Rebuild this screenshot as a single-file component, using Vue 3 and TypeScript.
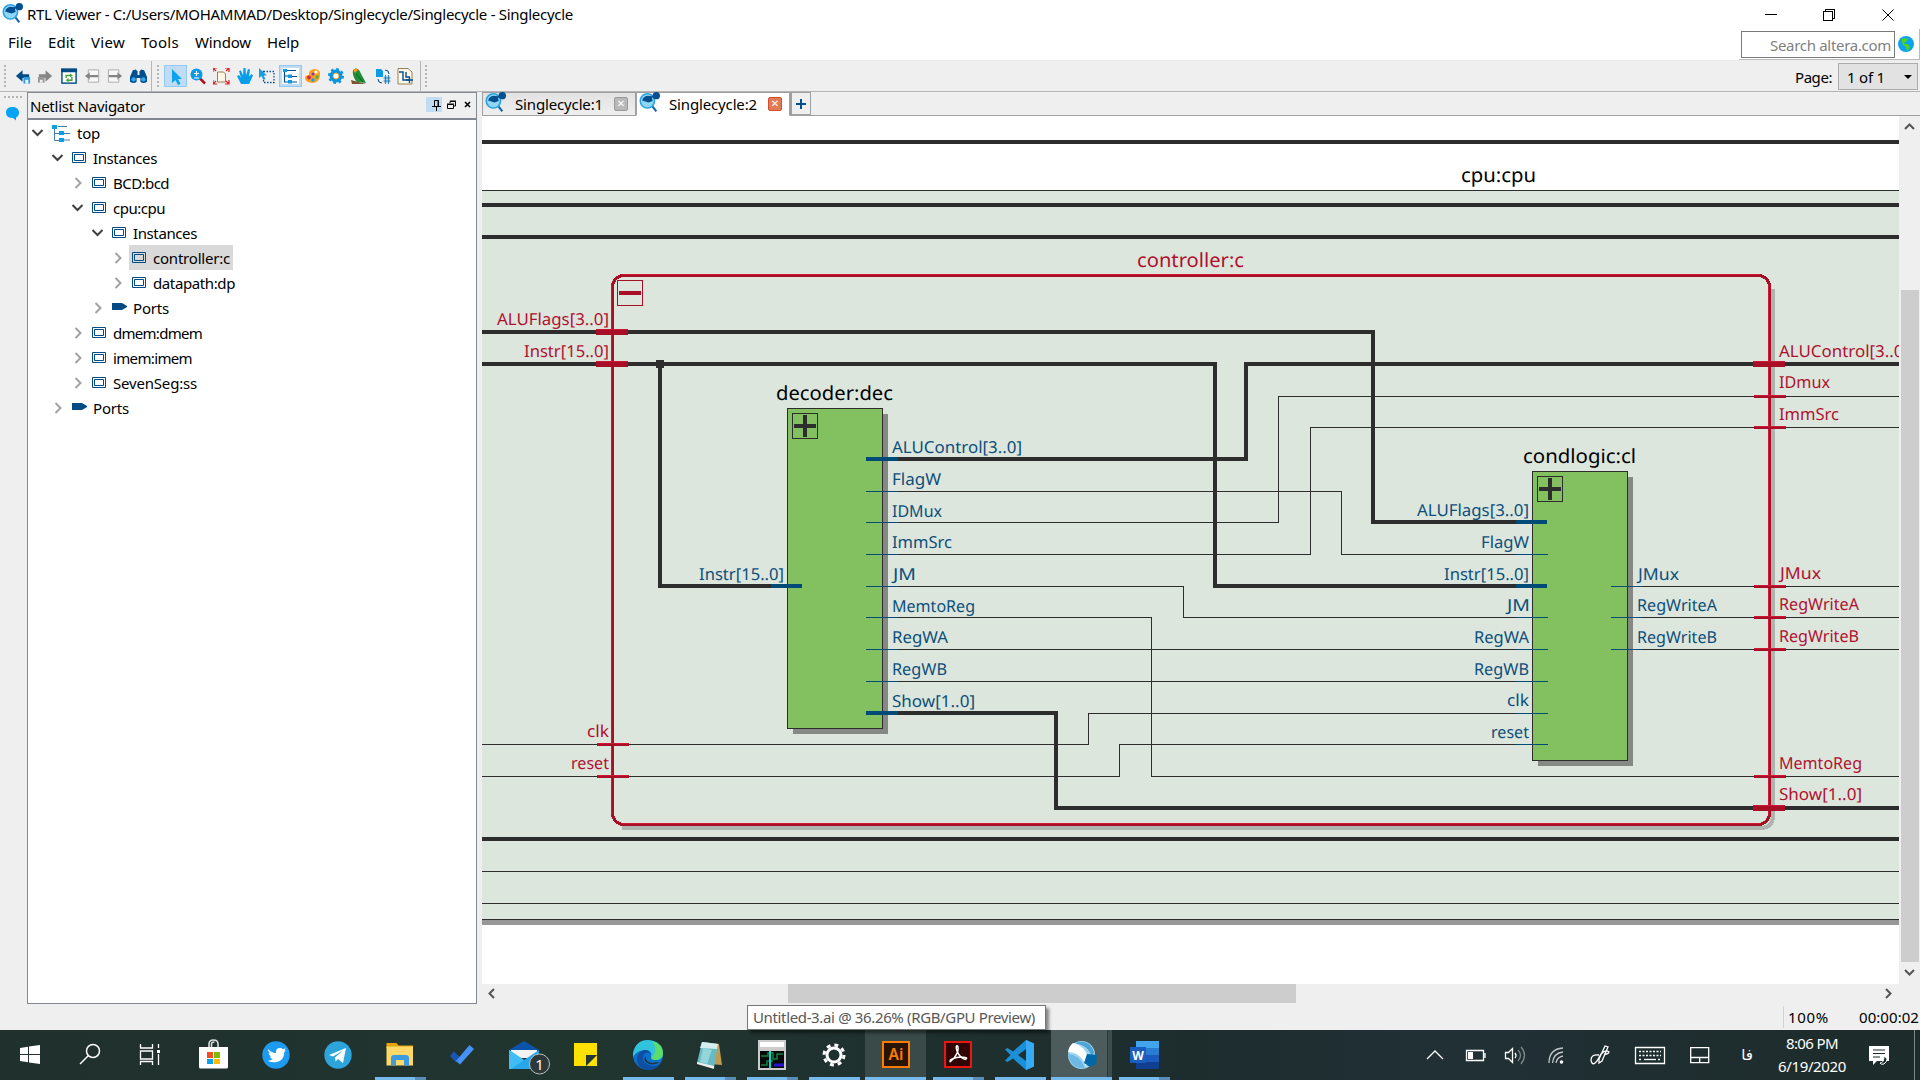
<script setup lang="ts">
interface Tool { id: string; x: number; w: number; on?: boolean; art: string }
interface TreeRow { label: string; depth: number; kind: 'root' | 'inst' | 'port'; open: boolean; width: number; selected?: boolean }
interface Label { t: string; x: number; y: number; w: number; end?: boolean }
interface Task { id: string; art: string; run?: boolean; multi?: boolean; active?: boolean; hot?: boolean }

/* Tightens or loosens tracking so that a label fills its column width. */
const vFit = {
  mounted(el: HTMLElement, binding: { value: number }) {
    const n = (el.textContent || '').trim().length
    const natural = el.getBoundingClientRect().width
    el.style.letterSpacing = (binding.value - natural) / n + 'px'
  },
}

const menus = [
  { t: 'File', w: 24 }, { t: 'Edit', w: 27 }, { t: 'View', w: 34 },
  { t: 'Tools', w: 38 }, { t: 'Window', w: 56 }, { t: 'Help', w: 32 },
]

const viewer = '<path d="M11.5 12l5 6.500" stroke="#1565a8" stroke-width="2"/><circle cx="8" cy="8.500" r="6.800" fill="#8fd6f7" stroke="#2aa3e0" stroke-width="1.500"/><path d="M3 8q1-4 5-4.500l4 .500 1 4.500-4 1.500z" fill="#00508f"/><path d="M10 6l6-3" stroke="#00508f" stroke-width="1.500"/><circle cx="16.500" cy="3.500" r="3.500" fill="#00508f"/>'

const nav: Tool[] = [
  { id: 'back', x: 14, w: 18, art: '<path d="M1 8l7-6v4h7v4H8v4z" fill="#004a86"/><rect x="9" y="9" width="7" height="7" fill="#2d9fe0"/><path d="M11 16v-4h3v4z" fill="#fff"/>' },
  { id: 'forward', x: 36, w: 18, art: '<path d="M16 8L9 2v4H2v4h7v4z" fill="#868686"/><rect x="1" y="9" width="7" height="6" fill="#999"/><path d="M3 15v-3h3v3z" fill="#eee"/>' },
  { id: 'refresh', x: 60, w: 18, art: '<rect x="1" y="1" width="15" height="14.500" fill="#fff" stroke="#004a86" stroke-width="1.500"/><path d="M0 0h17v4H0z" fill="#004a86"/><path d="M5.500 10V7.500h5M11.500 9v3.500h-5" stroke="#43a33c" stroke-width="1.500" fill="none"/><path d="M9.500 5l3 2.500-3 2zM8 10l-3 2.500 3 2z" fill="#43a33c"/>' },
  { id: 'prev-page', x: 84, w: 18, art: '<path d="M3.500 5V1.500h11v13h-11V11" fill="#f7f7f7" stroke="#aaa"/><path d="M0 8l5-4v2.800h9v2.400H5V12z" fill="#858585"/>' },
  { id: 'next-page', x: 106, w: 18, art: '<path d="M12.500 5V1.500h-11v13h11V11" fill="#f7f7f7" stroke="#aaa"/><path d="M16 8l-5-4v2.800H2v2.400h9V12z" fill="#858585"/>' },
  { id: 'find', x: 128, w: 20, art: '<path d="M3 2l3-1 2 2v4h2V3l2-2 3 1 3 7v5q-4 3-7 0v-4H7v4q-3 3-7 0V9z" fill="#00508f"/><circle cx="3.800" cy="11.500" r="2.300" fill="#38a7e8"/><circle cx="14.200" cy="11.500" r="2.300" fill="#38a7e8"/>' },
]

const tools: Tool[] = [
  { id: 'pointer', x: 164, w: 23, on: true, art: '<path d="M5 1v14l3.500-3 2.500 5 2.500-1.200-2.500-4.800h4z" fill="#0aa3ef"/>' },
  { id: 'zoom', x: 189, w: 18, art: '<path d="M10 10.500l5 5" stroke="#b01220" stroke-width="2.500"/><circle cx="6.500" cy="6.500" r="6" fill="#0a9ae6"/><path d="M4 5.500h5M6.500 3v5M4 10h5" stroke="#fff" stroke-width="1.200"/>' },
  { id: 'fit', x: 212, w: 18, art: '<path d="M4.500 4h6l2 2v8h-8z" fill="#fff6e4" stroke="#9b7f55"/><path d="M0 4V0h4M0 0l3 3M12 0h4v4M16 0l-3 3M0 12v4h4M0 16l3-3M12 16h4v-4M16 16l-3-3" stroke="#e31b23" fill="none" stroke-width="1.200"/>' },
  { id: 'pan', x: 236, w: 18, art: '<path d="M4 16L0 8l2-1 2 3L2 3l2-.500 2 5L6.500 0h2L9 7.500 11 1l2 .500-1 7 2.500-2.500 1.500 1.500-4 8.500z" fill="#079ee9"/>' },
  { id: 'area', x: 258, w: 18, art: '<path d="M4.500 3.500H15v11H4.500z" fill="none" stroke="#00508f" stroke-width="1.300" stroke-dasharray="1.500 1.500"/><path d="M0 0v10l2.500-2 2 4 2-1-2-3.500H8z" fill="#1a9ce2"/>' },
  { id: 'tree', x: 279, w: 23, on: true, art: '<rect x="0" y="0" width="17" height="16" fill="#fff"/><path d="M2.500 3v11h4M2.500 8h4M5 2.500h9M10 8.500h5M10 14h5" stroke="#00508f" stroke-width="1.200" fill="none"/><path d="M1 1h4v3H1zM6 6.500h4v3.500H6zM6 12h4v3.500H6z" fill="#0a9ae6"/>' },
  { id: 'palette', x: 304, w: 18, art: '<path d="M9 1q7 0 6 7-1 7-8 7-7-1-7-5 0-3 4-3-1-5 5-6z" fill="#f9a11b"/><circle cx="11" cy="4" r="1.600" fill="#fff"/><circle cx="4" cy="9.500" r="2" fill="#e81b56"/><circle cx="8" cy="12" r="1.800" fill="#19a0e8"/><circle cx="12" cy="9" r="1.700" fill="#4cb04a"/><circle cx="8" cy="6" r="1.500" fill="#8b2fc0"/>' },
  { id: 'options', x: 327, w: 18, art: '<circle cx="8" cy="8" r="4.700" fill="#fff" stroke="#0a95df" stroke-width="3.600"/><circle cx="8" cy="8" r="7" fill="none" stroke="#0a95df" stroke-width="2" stroke-dasharray="2.750 2.750"/><circle cx="8" cy="8" r="3" fill="none" stroke="#f5a11c"/>' },
  { id: 'bird', x: 350, w: 18, art: '<path d="M0 12l15 4H1z" fill="#7e5530"/><path d="M2 2q3-3 6 0l7 13-9-1Q1 9 2 2z" fill="#1f8e35"/><path d="M2 2q3-3 5 0l-3 3z" fill="#f7941d"/><path d="M5 6l7 8" stroke="#0b5d25"/>' },
  { id: 'swap', x: 374, w: 18, art: '<path d="M1 1h5l2 2v6H1z" fill="#0a9ae6"/><path d="M3 11q0 4 4 4M10 2q4 0 4 4" stroke="#00508f" fill="none"/><rect x="9" y="8" width="6" height="7" fill="#a5d8f5"/><path d="M8.500 10h7M8.500 13h7M10.500 7v9M13.500 7v9" stroke="#2a76ae" stroke-width=".9"/>' },
  { id: 'netlist', x: 396, w: 18, art: '<path d="M1 .500h10L15 4v12H1z" fill="#fff9e9" stroke="#97805a"/><path d="M2 4h4v8h6" stroke="#00508f" fill="none" stroke-width="1.400"/><path d="M9 4v5h4M12.500 9v6M9 12h7" stroke="#00508f" stroke-width="1.400" fill="none"/>' },
]

const rows: TreeRow[] = [
  { label: 'top', depth: 0, kind: 'root', open: true, width: 23 },
  { label: 'Instances', depth: 1, kind: 'inst', open: true, width: 64 },
  { label: 'BCD:bcd', depth: 2, kind: 'inst', open: false, width: 56 },
  { label: 'cpu:cpu', depth: 2, kind: 'inst', open: true, width: 52 },
  { label: 'Instances', depth: 3, kind: 'inst', open: true, width: 64 },
  { label: 'controller:c', depth: 4, kind: 'inst', open: false, width: 77, selected: true },
  { label: 'datapath:dp', depth: 4, kind: 'inst', open: false, width: 82 },
  { label: 'Ports', depth: 3, kind: 'port', open: false, width: 36 },
  { label: 'dmem:dmem', depth: 2, kind: 'inst', open: false, width: 89 },
  { label: 'imem:imem', depth: 2, kind: 'inst', open: false, width: 79 },
  { label: 'SevenSeg:ss', depth: 2, kind: 'inst', open: false, width: 84 },
  { label: 'Ports', depth: 1, kind: 'port', open: false, width: 36 },
]

const buses = [
  'M482 142H1899', 'M482 205H1899', 'M482 237H1899', 'M482 839H1899',
  'M482 332H1373V522H1532', 'M482 364H1215V586H1532', 'M660 364V586H787',
  'M883 459H1246V364H1899', 'M883 713H1056V808H1899',
]
const wires = [
  'M482 871.5H1899', 'M482 903.5H1899',
  'M883 491.5H1341.5V554.5H1532', 'M883 522.5H1278.5V396.5H1899', 'M883 554.5H1310.5V427.5H1899',
  'M883 586.5H1183.5V617.5H1532', 'M883 617.5H1151.5V776.5H1899', 'M883 649.5H1532', 'M883 681.5H1532',
  'M482 744.5H1088.5V713.5H1532', 'M482 776.5H1119.5V744.5H1532',
  'M1628 586.5H1899', 'M1628 617.5H1899', 'M1628 649.5H1899',
]
const pinBus = ['M866 459H898', 'M866 713H898', 'M771 586H802', 'M1516 522H1547', 'M1516 586H1547']
const pinWire = [
  ...[491.5, 522.5, 554.5, 586.5, 617.5, 649.5, 681.5].map(y => `M866 ${y}H898`),
  ...[554.5, 617.5, 649.5, 681.5, 713.5, 744.5].map(y => `M1516 ${y}H1548`),
  ...[586.5, 617.5, 649.5].map(y => `M1611 ${y}H1642`),
]
const redPins = [
  { x: 596, y: 329, h: 6 }, { x: 596, y: 361, h: 6 }, { x: 597, y: 743, h: 3 }, { x: 597, y: 775, h: 3 },
  { x: 1753, y: 361, h: 6 }, { x: 1754, y: 395, h: 3 }, { x: 1754, y: 426, h: 3 }, { x: 1754, y: 585, h: 3 },
  { x: 1754, y: 616, h: 3 }, { x: 1754, y: 648, h: 3 }, { x: 1754, y: 775, h: 3 }, { x: 1753, y: 805, h: 6 },
]
const blocks = [
  { x: 787, y: 408, w: 96, h: 321 },
  { x: 1532, y: 471, w: 96, h: 290 },
]
const titles: (Label & { red?: boolean })[] = [
  { t: 'cpu:cpu', x: 1461, y: 181.5, w: 75 },
  { t: 'controller:c', x: 1137, y: 266.5, w: 107, red: true },
  { t: 'decoder:dec', x: 776, y: 399.5, w: 117 },
  { t: 'condlogic:cl', x: 1523, y: 462.5, w: 113 },
]
const redLabels: Label[] = [
  { t: 'ALUFlags[3..0]', x: 609, y: 325, w: 112, end: true },
  { t: 'Instr[15..0]', x: 609, y: 357, w: 85, end: true },
  { t: 'clk', x: 609, y: 737, w: 22, end: true },
  { t: 'reset', x: 609, y: 769, w: 38, end: true },
  { t: 'ALUControl[3..0]', x: 1779, y: 357, w: 130 },
  { t: 'IDmux', x: 1779, y: 388, w: 51 },
  { t: 'ImmSrc', x: 1779, y: 420, w: 60 },
  { t: 'JMux', x: 1780, y: 579, w: 41 },
  { t: 'RegWriteA', x: 1779, y: 610, w: 80 },
  { t: 'RegWriteB', x: 1779, y: 642, w: 80 },
  { t: 'MemtoReg', x: 1779, y: 769, w: 83 },
  { t: 'Show[1..0]', x: 1779, y: 800, w: 83 },
]
const blueLabels: Label[] = [
  { t: 'ALUControl[3..0]', x: 892, y: 453, w: 130 },
  { t: 'FlagW', x: 892, y: 485, w: 49 },
  { t: 'IDMux', x: 892, y: 517, w: 50 },
  { t: 'ImmSrc', x: 892, y: 548, w: 60 },
  { t: 'JM', x: 893, y: 580, w: 23 },
  { t: 'MemtoReg', x: 892, y: 612, w: 83 },
  { t: 'RegWA', x: 892, y: 643, w: 56 },
  { t: 'RegWB', x: 892, y: 675, w: 55 },
  { t: 'Show[1..0]', x: 892, y: 707, w: 83 },
  { t: 'Instr[15..0]', x: 784, y: 580, w: 85, end: true },
  { t: 'ALUFlags[3..0]', x: 1529, y: 516, w: 112, end: true },
  { t: 'FlagW', x: 1529, y: 548, w: 48, end: true },
  { t: 'Instr[15..0]', x: 1529, y: 580, w: 85, end: true },
  { t: 'JM', x: 1530, y: 611, w: 23, end: true },
  { t: 'RegWA', x: 1529, y: 643, w: 55, end: true },
  { t: 'RegWB', x: 1529, y: 675, w: 55, end: true },
  { t: 'clk', x: 1529, y: 706, w: 22, end: true },
  { t: 'reset', x: 1529, y: 738, w: 38, end: true },
  { t: 'JMux', x: 1638, y: 580, w: 41 },
  { t: 'RegWriteA', x: 1637, y: 611, w: 80 },
  { t: 'RegWriteB', x: 1637, y: 643, w: 80 },
]

const system: Task[] = [
  { id: 'start', art: '<path d="M6 9l8-1.300V15H6zM15 7.500L26 6v9H15zM6 16h8v7.300L6 22zM15 16h11v9l-11-1.500z" fill="#fff"/>' },
  { id: 'search', art: '<circle cx="19" cy="12" r="6.500" fill="none" stroke="#fff" stroke-width="1.500"/><path d="M14.500 16.500L6 25" stroke="#fff" stroke-width="1.500"/>' },
  { id: 'task-view', art: '<path d="M6.500 5v4h12V5M6.500 26v-3.500h12V26M6.500 12h12v8h-12zM24.500 5v4M24.500 15v11" fill="none" stroke="#fff" stroke-width="1.300"/><rect x="23" y="11" width="3" height="3" fill="#fff"/>' },
]
const tasks: Task[] = [
  { id: 'store', art: '<path d="M11 9V5q0-4 4.500-4T20 5v4M13.500 9V5q0-2 3-2" fill="none" stroke="#ddd" stroke-width="1.600"/><path d="M1 8h29v20q0 1.500-1.500 1.500h-26Q1 29.500 1 28z" fill="#fff"/><path d="M9 13h6v6H9z" fill="#f25022"/><path d="M16 13h6v6h-6z" fill="#7fba00"/><path d="M9 20h6v5H9z" fill="#00a4ef"/><path d="M16 20h6v5h-6z" fill="#ffb900"/>' },
  { id: 'twitter', art: '<circle cx="16" cy="16" r="13.700" fill="#1d9bf0"/><path d="M8 10q3.500 4 8 4-.500-5 4-5 2 0 3 1.200l2.500-1-1 2.300 1.500-.300-1.800 2q0 9-8.400 10-4.500.500-8-1.500 3 0 5-1.700-2.500-.500-3-2.500h1.500q-2.500-1-2.700-3.500l1.500.500Q7.500 12.500 8 10z" fill="#fff"/>' },
  { id: 'telegram', art: '<circle cx="16" cy="16" r="13.700" fill="#2da5dc"/><path d="M7 16l17-7-3 15-5-4-2.500 2.500-.500-4 8-7-10 6z" fill="#fff"/>' },
  { id: 'explorer', art: '<path d="M2.500 4h10l2 2.500H29V9H2.500z" fill="#e5a50a"/><path d="M2.500 7.500H29v19H2.500z" fill="#ffd869"/><path d="M7 26.500V19q0-3 3-3h12q3 0 3 3v7.500h-5V21h-8v5.500z" fill="#3d9be0"/>', run: true, multi: true },
  { id: 'todo', art: '<path d="M4 17l4-4.500 6 6-4 5z" fill="#1b55b8"/><path d="M10 22L23.500 6l4.500 4-14 15.500z" fill="#4593f8"/>' },
  { id: 'mail', art: '<path d="M1 11l15-9 15 9v3H1z" fill="#0a55ab"/><path d="M3 11h26v8H3z" fill="#f2f2f2"/><path d="M1 11l15 10 15-10v19H1z" fill="#27a7ea"/><path d="M1 11l15 10L3 30H1z" fill="#40bdf5"/><circle cx="31.500" cy="25" r="10" fill="#2d3838" stroke="#b9bebe"/><text x="31.500" y="30.500" fill="#fff" font-size="15" text-anchor="middle">1</text>' },
  { id: 'notes', art: '<path d="M4 4h23v12l-11 11H4z" fill="#ffe100"/><path d="M27 16v11H16z" fill="#ffe100"/><path d="M16 16h11L16 27z" fill="#263535"/>' },
  { id: 'edge', run: true, art: '<circle cx="16" cy="16" r="15" fill="#0c6fcb"/><path d="M1 14Q4 1 16 1q14 1 15 13 0 7-7 7-5 0-5-3 2-6-5-7-9 0-13 7z" fill="#31c2dc"/><path d="M20 2q11 3 11 12 0 7-7 7-4 0-5-2 8-7 1-17z" fill="#5bdc6d"/><path d="M12 15q-3 6 3 10 6 4 13 0-5 7-14 6Q4 28 5 19q1-6 7-8 5 0 6 3-4-1-6 1z" fill="#0f4fa2"/><path d="M14 17q-1 6 6 7l8-1q-8 5-14 0-3-3 0-6z" fill="#23343a"/>' },
  { id: 'notepad', run: true, multi: true, art: '<path d="M9 3l16 2 3 21-13-1z" fill="#be9b52"/><path d="M8 3l16 2-4 24-17-5z" fill="#67bac1"/><path d="M8 3l16 2-1 5-17-1z" fill="#d4edf0"/><path d="M3 23l17 4v3L3 25z" fill="#eee"/><path d="M9 9l9 2-5 14-7-2z" fill="#93d5d9"/>' },
  { id: 'waves', run: true, multi: true, art: '<path d="M2 1h28v30H2z" fill="#ccc"/><path d="M4 3h24v5H4z" fill="#fff"/><path d="M4 12h24v17H4z" fill="#030a08"/><path d="M5 17h7v-3h5v6h4v-5h6M5 26h6v-4h6" stroke="#118040" fill="none" stroke-width="1.500"/><path d="M14 12v17" stroke="#08d9d9" stroke-width="2"/><path d="M18 26h10" stroke="#2a12d0" stroke-width="3"/>' },
  { id: 'settings', run: true, art: '<circle cx="16" cy="16" r="7" fill="none" stroke="#fff" stroke-width="3"/><circle cx="16" cy="16" r="10" fill="none" stroke="#fff" stroke-width="3" stroke-dasharray="3.930 3.930"/>' },
  { id: 'illustrator', run: true, hot: true, art: '<path d="M3 3h26v25H3z" fill="#281402" stroke="#ff7c00" stroke-width="2"/><text x="16" y="21" fill="#ff7c00" font-size="15.500" font-weight="600" text-anchor="middle">Ai</text>' },
  { id: 'acrobat', run: true, multi: true, art: '<path d="M3 3h26v25H3z" fill="#300404" stroke="#ea1710" stroke-width="2"/><path d="M9 22c3-2 8-9 7-14-1-3-3 0-1 4 2 5 6 9 9 8 3-2-7-3-14 0-3 1-2 4-1 2z" fill="none" stroke="#fff" stroke-width="1.500"/>' },
  { id: 'code', run: true, art: '<path d="M22 1l8 3.500v23L22 31 9 19.500 3.500 23 1 21.500 6.500 16 1 10.500 3.500 9 9 12.500zM22 10l-8 6 8 6z" fill="#1b8fd8" fill-rule="evenodd"/><path d="M22 1l8 3.500v23L22 31z" fill="#36aaf3"/>' },
  { id: 'quartus', run: true, active: true, art: '<ellipse cx="15.500" cy="16" rx="13.500" ry="14" fill="#9bd3f1"/><path d="M9 4q14-5 19 9l-2 5Q22 6 9 4z" fill="#4ba3d6"/><path d="M2 13q1-6 5-9 13 3 15 16l-2 8Q16 14 2 13z" fill="#fff"/><path d="M2 15q12 1 17 14Q5 31 2 15z" fill="#6db9e3"/><path d="M21 15l10 1-1 9-6 3-6-4z" fill="#0067a8"/>' },
  { id: 'word', run: true, multi: true, art: '<path d="M8 2h23v8H8z" fill="#41a5ee"/><path d="M8 9h23v7H8z" fill="#2b7cd3"/><path d="M8 16h23v7H8z" fill="#185abd"/><path d="M8 23h23v7H8z" fill="#103f91"/><path d="M2 8h16v16H2z" fill="#1a5dbe"/><text x="10" y="20.500" fill="#fff" font-size="12" font-weight="700" text-anchor="middle">W</text>' },
]
</script>

<template>
  <div class="desk">
    <header class="titlebar">
      <svg class="app-ico" width="21" height="21" viewBox="0 0 20 20" v-html="viewer"></svg>
      <span v-fit="546">RTL Viewer - C:/Users/MOHAMMAD/Desktop/Singlecycle/Singlecycle - Singlecycle</span>
      <svg class="caption" width="130" height="20" viewBox="0 0 130 20" fill="none" stroke="#000" shape-rendering="crispEdges">
        <path d="M0 9.500h12M58.500 6.500h9v9h-9zM60.500 6V4.500h9v9H68" />
        <path d="M117.500 4.500l11 11M128.500 4.500l-11 11" shape-rendering="auto" />
      </svg>
    </header>

    <div class="menubar">
      <nav><div v-for="m in menus" :key="m.t"><span v-fit="m.w">{{ m.t }}</span></div></nav>
      <div class="search">
        <div class="field"><span v-fit="121">Search altera.com</span></div>
        <svg width="16" height="16" viewBox="0 0 16 16"><circle cx="8" cy="8" r="8" fill="#0da4ee" /><path d="M4 3l3-1 3 1-1 2-2 1-1 2 3 0 3 2-1 3-2 2-1-4-3-2-1-3z" fill="#54d321" /></svg>
      </div>
    </div>

    <div class="toolbar">
      <div class="group nav">
        <i class="grip"></i>
        <span v-for="t in nav" :key="t.id" class="tool" :style="{ left: t.x + 'px', width: t.w + 'px' }"><svg width="17" height="17" viewBox="0 0 18 17" fill="none" v-html="t.art"></svg></span>
      </div>
      <div class="group edit">
        <i class="grip"></i>
        <span v-for="t in tools" :key="t.id" class="tool" :class="{ on: t.on }" :style="{ left: t.x - 153 + 'px', width: t.w + 'px' }"><svg width="17" height="17" viewBox="0 0 17 17" fill="none" v-html="t.art"></svg></span>
      </div>
      <div class="group rest">
        <i class="grip"></i>
        <div class="page"><span v-fit="37">Page:</span><div class="combo"><span v-fit="38">1 of 1</span><i></i></div></div>
      </div>
    </div>

    <main class="work">
      <aside class="strip">
        <i></i>
        <svg width="14" height="14" viewBox="0 0 14 14"><path d="M6.500 0C10 0 13 2 13 5.500q0 3.500-3 5v3L7 11Q0 11 0 5.500 0 0 6.500 0z" fill="#00a3f5" /></svg>
      </aside>

      <section class="dock">
        <div class="dock-head">
          <span v-fit="115">Netlist Navigator</span>
          <div class="dock-btns">
            <b><svg width="16" height="15" viewBox="0 0 16 15" fill="none" stroke="#000"><path d="M6.500 9V3.500h4V9M10 3.500V9M4 9.500h9M8.500 10v4" /></svg></b>
            <svg width="10" height="10" viewBox="0 0 10 10" fill="none" stroke="#000"><path d="M3 3V1.500h5.500V6H7M3 1h6" /><path d="M.500 4.500h6v4h-6zM0 4h7" /></svg>
            <svg width="7" height="7" viewBox="0 0 7 7" stroke="#000" stroke-width="1.600"><path d="M1 1l5 5M6 1L1 6" /></svg>
          </div>
        </div>
        <ul class="tree">
          <li v-for="(r, i) in rows" :key="i" :style="{ paddingLeft: r.depth * 20 + 'px' }">
            <svg class="chev" width="20" height="12" viewBox="0 0 20 12" fill="none" stroke-width="2">
              <path v-if="r.open" d="M4.500 3l5 5 5-5" stroke="#404040" />
              <path v-else d="M7.500 1l5 5-5 5" stroke="#a2a2a2" />
            </svg>
            <div class="node" :class="[r.kind, { selected: r.selected }]">
              <svg v-if="r.kind === 'root'" width="19" height="18" viewBox="0 0 19 18"><path d="M2.500 4v12.500h5M2.500 9.500h5M6 2.500h9M12 9.500h6M12 16h6" stroke="#3c7fb1" fill="none" /><path d="M0 1h5v4H0zM7 7h5v4H7zM7 14h5v4H7z" fill="#0aa0e8" /></svg>
              <svg v-else-if="r.kind === 'inst'" width="14" height="11" viewBox="0 0 14 11" fill="none" stroke="#004a86"><path d="M.500.500h13v10H.500zM2.500 2.500h9v6h-9z" /></svg>
              <svg v-else width="15" height="7" viewBox="0 0 15 7"><path d="M0 0h10l5 3v1l-5 3H0z" fill="#004a86" /></svg>
              <span v-fit="r.width">{{ r.label }}</span>
            </div>
          </li>
        </ul>
      </section>

      <section class="view">
        <div class="tabs">
          <div class="tab"><svg width="21" height="21" viewBox="0 0 20 20" v-html="viewer"></svg><span v-fit="88">Singlecycle:1</span><b>✕</b></div>
          <div class="tab current"><svg width="21" height="21" viewBox="0 0 20 20" v-html="viewer"></svg><span v-fit="88">Singlecycle:2</span><b>✕</b></div>
          <div class="add"><svg width="10" height="10" viewBox="0 0 10 10" stroke="#00508f" stroke-width="2"><path d="M0 5h10M5 0v10" /></svg></div>
        </div>
        <div class="body">
          <svg class="sheet" width="1417" height="868" viewBox="482 116 1417 868" fill="none" shape-rendering="crispEdges">
            <rect x="482" y="190" width="1417" height="730" fill="#dce6dc" />
            <path d="M482 190.500H1899M482 919.500H1899" stroke="#2d2d2d" />
            <rect x="482" y="920" width="1417" height="5" fill="#979797" />
            <path d="M1773 289V815Q1773 828 1760 828H622" stroke="#aeb5ae" stroke-width="4" />
            <g v-for="(b, i) in blocks" :key="'b' + i">
              <rect :x="b.x + 6" :y="b.y + 6" :width="b.w - 1" :height="b.h - 1" fill="#848984" />
              <rect :x="b.x + .5" :y="b.y + .5" :width="b.w - 1" :height="b.h - 1" fill="#83c060" stroke="#2d2d2d" />
              <rect :x="b.x + 5.500" :y="b.y + 5.500" width="25" height="25" stroke="#2d2d2d" />
              <path :d="`M${b.x + 7} ${b.y + 18}h22M${b.x + 18} ${b.y + 7}v22`" stroke="#2d2d2d" stroke-width="4" />
            </g>
            <path v-for="d in wires" :key="d" :d="d" stroke="#2d2d2d" />
            <path v-for="d in buses" :key="d" :d="d" stroke="#2d2d2d" stroke-width="4" />
            <rect x="656" y="360" width="8" height="8" fill="#2d2d2d" />
            <path v-for="d in pinWire" :key="d" :d="d" stroke="#004a78" />
            <path v-for="d in pinBus" :key="d" :d="d" stroke="#004a78" stroke-width="4" />
            <rect x="612.5" y="275.5" width="1157" height="549" rx="11" stroke="#a80f27" stroke-width="3" />
            <path d="M622 274.500H1760M622 823.500H1760M611.500 285V815M1768.500 285V815" stroke="#cf1735" />
            <g v-for="(p, i) in redPins" :key="'p' + i">
              <rect :x="p.x" :y="p.y" width="32" :height="p.h" fill="#a80f27" />
              <rect :x="p.x" :y="p.y" width="32" height="1" fill="#cf1735" />
            </g>
            <rect x="617.5" y="280.5" width="25" height="25" stroke="#a80f27" />
            <rect x="619" y="291" width="22" height="4" fill="#a80f27" />
            <text v-for="l in titles" :key="l.t" :x="l.x" :y="l.y" :textLength="l.w" lengthAdjust="spacingAndGlyphs" class="big" :class="{ red: l.red }">{{ l.t }}</text>
            <text v-for="(l, i) in redLabels" :key="'r' + i" :x="l.end ? l.x - l.w : l.x" :y="l.y" :textLength="l.w" lengthAdjust="spacingAndGlyphs" class="red">{{ l.t }}</text>
            <text v-for="(l, i) in blueLabels" :key="'l' + i" :x="l.end ? l.x - l.w : l.x" :y="l.y" :textLength="l.w" lengthAdjust="spacingAndGlyphs" class="blue">{{ l.t }}</text>
          </svg>
          <div class="vscroll">
            <svg width="20" height="20" viewBox="0 0 20 20" fill="none" stroke="#555" stroke-width="2"><path d="M5 13l4.500-4.500L14 13" /></svg>
            <div class="vthumb"></div>
            <svg width="20" height="20" viewBox="0 0 20 20" fill="none" stroke="#555" stroke-width="2"><path d="M5 8l4.500 4.500L14 8" /></svg>
          </div>
        </div>
        <div class="hscroll">
          <svg width="20" height="19" viewBox="0 0 20 19" fill="none" stroke="#555" stroke-width="2"><path d="M12 5L7.500 9.500 12 14" /></svg>
          <div class="hthumb"></div>
          <svg class="right" width="20" height="19" viewBox="0 0 20 19" fill="none" stroke="#555" stroke-width="2"><path d="M8 5l4.500 4.500L8 14" /></svg>
        </div>
      </section>
    </main>

    <footer class="status">
      <div class="tip"><span v-fit="282">Untitled-3.ai @ 36.26% (RGB/GPU Preview)</span></div>
      <div class="pct"><span v-fit="41">100%</span></div>
      <div class="clock"><span v-fit="60">00:00:02</span></div>
    </footer>

    <div class="taskbar">
      <div v-for="t in system" :key="t.id" class="sys"><svg width="32" height="32" viewBox="0 0 32 32" v-html="t.art"></svg></div>
      <div class="apps">
        <div v-for="t in tasks" :key="t.id" class="task" :class="{ run: t.run, multi: t.multi, active: t.active, hot: t.hot }"><svg width="32" height="32" viewBox="0 0 32 32" v-html="t.art"></svg></div>
      </div>
      <div class="tray">
        <svg width="270" height="50" viewBox="1420 1030 270 50" fill="none" stroke="#fff" stroke-width="1.300">
          <path d="M1427 1059l8-8 8 8" />
          <path d="M1466.500 1050.500h17v10h-17zM1485 1053v5" /><rect x="1468" y="1052" width="5" height="7" fill="#fff" stroke="none" />
          <path d="M1505.500 1052.500h3l4-4v14l-4-4h-3zM1515 1053q2 2.500 0 5" /><path d="M1518 1050q5 5 0 11M1521 1047q7 8 0 17" stroke="#7b8686" />
          <path d="M1549 1063q0-14 14-15M1552.500 1063q1-10 10.500-11M1556 1063q1-6 7-7" stroke="#c3c9c9" /><circle cx="1561.500" cy="1062" r="1.800" fill="#fff" stroke="none" />
          <path d="M1599 1059l6-13 3 1-6 14-3 2zM1599 1055q-8-1-8 5 1 7 6 1l4-7q5-5 8-2-1 3-5 2" />
          <path d="M1635.500 1047.500h29v16h-29z" /><path d="M1639 1051.500h22M1639 1055.500h22M1639 1059.500h3M1658 1059.500h3" stroke-dasharray="2 1.500" /><path d="M1644 1059.500h12" />
        </svg>
        <svg class="pad" width="20" height="50" viewBox="0 0 20 50" fill="none" stroke="#fff" stroke-width="1.300"><path d="M.700 17.700h18v15H.700zM.700 27.500h18M9.700 27.500v5" /></svg>
        <span class="lang">فا</span>
        <div class="when"><span v-fit="52">8:06 PM</span><span v-fit="68">6/19/2020</span></div>
        <svg class="note" width="22" height="22" viewBox="0 0 22 22"><path d="M0 1h20v15H8l-4 4v-4H0z" fill="#fff" /><path d="M4 5h12M4 8.500h12M4 12h7" stroke="#1e2d2d" stroke-width="1.200" /><path d="M15 11q6 3 0 8-3 1-4-1 4 0 4-7z" fill="#1e2d2d" stroke="#fff" /></svg>
        <i class="peek"></i>
      </div>
    </div>
  </div>
</template>

<style>
html, body { margin: 0; overflow: hidden; }
</style>

<style scoped>
.desk { width: 1920px; height: 1080px; display: flex; flex-direction: column; overflow: hidden; background: #efefef; color: #000; font: 15px/20px 'Noto Sans', 'Open Sans', sans-serif; }
.desk * { box-sizing: border-box; }
span { display: inline-block; white-space: pre; }
svg { display: block; flex: none; }
.titlebar { height: 29px; flex: none; display: flex; align-items: center; background: #fff; padding-left: 2px; }
.titlebar span { margin-top: -2px; }
.app-ico { margin: -2px 4px 0 0; }
.caption { margin: 0 25px 0 auto; }
.menubar { height: 32px; flex: none; display: flex; justify-content: space-between; background: #fff; border-bottom: 1px solid #ececec; }
.menubar nav { display: flex; gap: 16px; padding: 3px 0 0 8px; }
.search { width: 181px; height: 31px; display: flex; padding: 2px 0 0 2px; border-right: 1px solid #bbb; border-bottom: 1px solid #bbb; }
.field { width: 154px; height: 27px; border: 1px solid #7a7a7a; color: #7f7f7f; text-align: right; padding: 3px 3px 0 0; margin-right: 3px; flex: none; }
.search svg { margin-top: 5px; }
.toolbar { height: 31px; flex: none; display: flex; border-bottom: 1px solid #b5b5b5; }
.group { position: relative; border-right: 1px solid #b5b5b5; }
.nav.group { width: 152px; }
.edit { width: 268px; margin-left: 1px; }
.rest { flex: 1; border-right: 0; }
.grip { position: absolute; left: 4px; top: 4px; width: 2px; height: 23px; background: repeating-linear-gradient(#b4b4b4 0 2px, transparent 2px 4px); }
.tool { position: absolute; top: 4px; height: 22px; display: flex; align-items: center; justify-content: center; }
.tool.on { background: #c0dcf3; border: 1px solid #90c8f6; }
.page { display: flex; justify-content: flex-end; align-items: center; gap: 6px; padding: 2px 2px 0 0; }
.combo { width: 80px; height: 27px; background: #e2e2e2; border: 1px solid #adadad; padding: 3px 0 0 8px; position: relative; }
.combo i { position: absolute; right: 5px; top: 11px; border: 4px solid transparent; border-top-color: #000; }
.work { height: 911px; flex: none; display: flex; }
.strip { width: 27px; padding: 4px 0 0 4px; }
.strip i { display: block; height: 2px; width: 18px; background: repeating-linear-gradient(90deg, #b4b4b4 0 2px, transparent 2px 4px); }
.strip svg { margin: 9px 0 0 2px; }
.dock { width: 450px; height: 912px; border: 1px solid #828790; margin-right: 5px; display: flex; flex-direction: column; background: #fff; }
.dock-head { height: 27px; flex: none; background: #efefef; border-bottom: 2px solid #828790; display: flex; justify-content: space-between; padding: 3px 5px 0 2px; }
.dock-btns { display: flex; align-items: center; gap: 5px; height: 17px; }
.dock-btns b { background: #c0dcf3; width: 16px; height: 15px; }
.dock-btns svg:last-child { margin-left: 2px; }
.tree { margin: 0; padding: 0; list-style: none; }
.tree li { height: 25px; display: flex; align-items: center; }
.chev { margin-top: 0; }
.node { height: 25px; display: flex; align-items: center; padding: 0 3px; margin-left: 1px; }
.node.inst svg { margin: 0 7px 0 0; }
.node.port svg { margin: -3px 6px 0 0; }
.node.root svg { margin: 0 6px 0 0; }
.node.selected { background: #d9d9d9; }
.view { width: 1438px; display: flex; flex-direction: column; }
.tabs { height: 24px; flex: none; display: flex; border-bottom: 1px solid #a0a0a0; }
.tab { width: 154px; height: 24px; display: flex; align-items: center; border: 1px solid #a0a0a0; background: linear-gradient(#e2e2e2, #efefef); padding-left: 2px; }
.tab svg { margin: -3px 9px 0 0; }
.tab b { width: 14px; height: 14px; margin-left: auto; margin-right: 7px; border-radius: 2px; background: #b9b9b9; border: 1px solid #999; color: #fff; font: 700 10px/12px 'DejaVu Sans', sans-serif; text-align: center; }
.tab.current { background: #fff; border-bottom-color: #fff; }
.tab.current b { background: #e17b56; border-color: #d54e30; }
.add { width: 21px; border: 1px solid #a0a0a0; border-left-width: 2px; display: flex; align-items: center; justify-content: center; }
.body { display: flex; height: 868px; }
.sheet { background: #fff; }
.sheet text { font-size: 16.5px; text-rendering: geometricPrecision; }
.sheet .big { font-size: 19.5px; fill: #000; }
.sheet .blue { fill: #0d4e7b; }
.sheet .red { fill: #b01030; }
.vscroll { width: 20px; margin-left: 1px; display: flex; flex-direction: column; }
.vthumb { width: 18px; height: 672px; margin: 154px 0 0 1px; background: #cdcdcd; }
.hscroll { display: flex; height: 19px; }
.hthumb { width: 508px; height: 19px; margin-left: 286px; background: #cdcdcd; }
.hscroll .right { margin-left: 582px; }
.status { height: 27px; flex: none; display: flex; justify-content: flex-end; position: relative; padding: 3px 1px 0 0; }
.pct { width: 76px; border-left: 1px solid #d2d2d2; padding: 1px 0 0 4px; height: 22px; }
.clock { padding-top: 1px; }
.tip { position: absolute; left: 747px; top: 2px; width: 299px; height: 25px; z-index: 2; border: 1px solid #767676; background: #fff; color: #575757; padding: 1px 0 0 5px; box-shadow: 3px 3px 3px rgba(0, 0, 0, .45); }
.taskbar { height: 50px; flex: none; display: flex; color: #fff; background: linear-gradient(90deg, #20302d, #21352f 30%, #1d2d2e 62%, #203035 76%, #1d2b29); }
.sys { width: 60px; padding: 9px 14px; }
.apps { display: flex; padding-left: 2px; }
.task { width: 62px; height: 50px; padding: 9px 0 0 16px; position: relative; }
.task svg { overflow: visible; }
.task.run::after { content: ''; position: absolute; left: 7px; bottom: 0; width: 51px; height: 3px; background: #76b9ed; }
.task.multi::after { background: linear-gradient(90deg, #76b9ed 0 40px, #5a8db5 40px); }
.task.hot { background: linear-gradient(90deg, transparent 1px, #3a4a49 1px); }
.task.active { background: linear-gradient(90deg, transparent 1px, #4c5b5c 1px 57px, #27393a 57px 58px, #3c4c4c 58px); }
.task.hot::after, .task.active::after { left: 1px; width: 61px; }
.tray { display: flex; margin-left: auto; width: 500px; align-items: center; }
.lang { font: 15px/20px 'DejaVu Sans', sans-serif; margin-left: 30px; width: 14px; text-align: center; }
.when { width: 76px; margin-left: 20px; height: 46px; display: flex; flex-direction: column; align-items: center; line-height: 23px; }
.note { margin: 2px 0 0 19px; }
.peek { width: 1px; height: 50px; background: #7f8989; margin-left: auto; margin-right: 5px; }
</style>
